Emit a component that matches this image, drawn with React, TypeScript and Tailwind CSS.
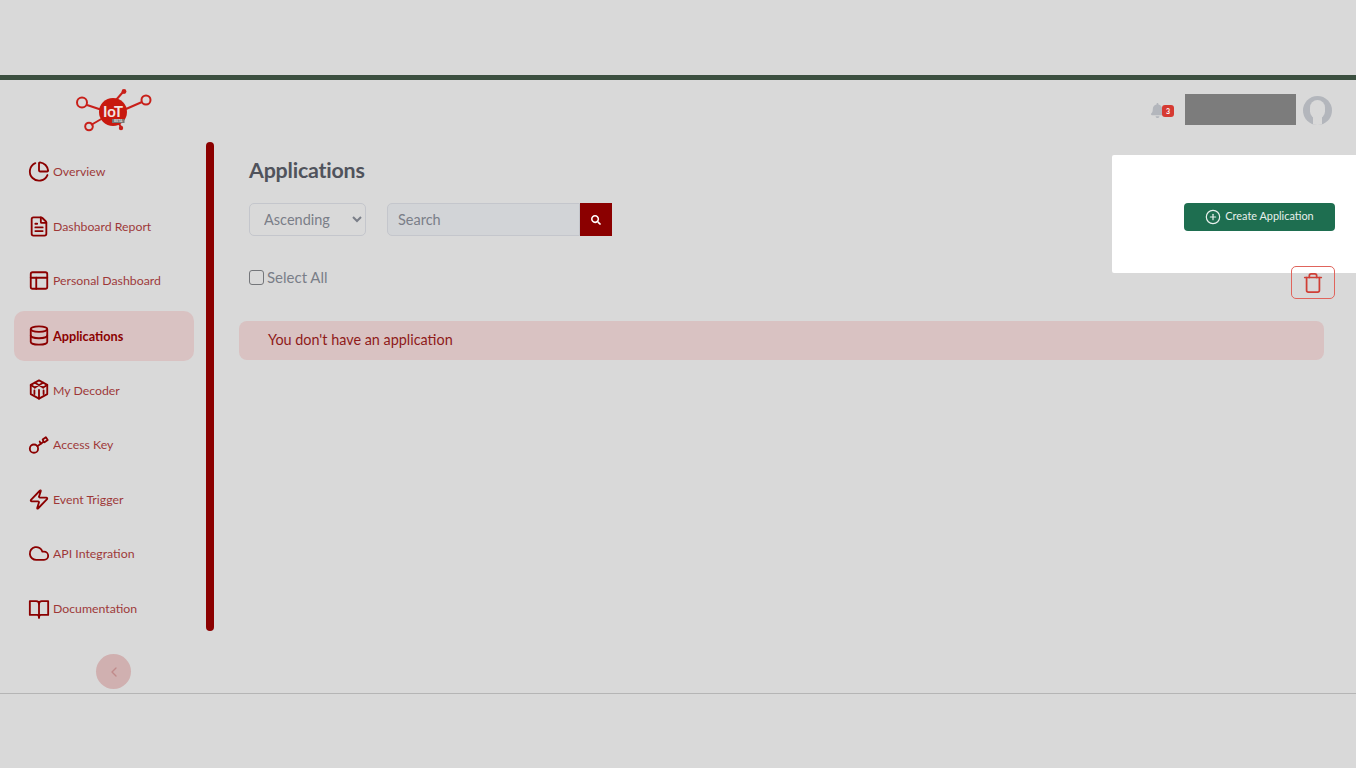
import { ChevronLeft, Cloud, Database, FileText, PanelsTopLeft, PieChart, Trash, Zap, CirclePlus } from "lucide-react";
import { FaBell, FaSearch } from "react-icons/fa";
import type { ReactNode } from "react";

const DecoderIcon = () => (
  <svg viewBox="0 0 24 24" fill="none" stroke="currentColor" strokeWidth="2" strokeLinejoin="round" strokeLinecap="round" className="w-[22px] h-[22px]">
    <path d="M12 2l9 5v10l-9 5-9-5V7z" />
    <path d="M7.5 4.6l9 5.2M16.5 4.6l-9 5.2" />
    <path d="M12 12.5V22M3 7l4.5 2.8M21 7l-4.5 2.8" />
    <path d="M7 13v4M17 13v4" />
  </svg>
);

const KeyIcon = () => (
  <svg viewBox="0 0 24 24" fill="none" stroke="currentColor" strokeWidth="2" strokeLinejoin="round" strokeLinecap="round" className="w-[22px] h-[22px]">
    <circle cx="6.5" cy="16.5" r="4.5" />
    <path d="M10.2 13.8L17 9" />
    <path d="M14 11l-1.2-2.2" />
    <path d="M17 9l-1-2.5 3.5-2.5 2 3-3.5 2.5z" />
  </svg>
);

const BookIcon = () => (
  <svg viewBox="0 0 24 24" fill="none" stroke="currentColor" strokeWidth="2" strokeLinejoin="round" strokeLinecap="round" className="w-[22px] h-[22px]">
    <path d="M2 4h7q3 0 3 3 0-3 3-3h7v15h-8q-2 0-2 3 0-3-2-3H2z" />
    <path d="M12 7v15" />
  </svg>
);

const Logo = () => (
  <svg viewBox="0 0 80 44" className="w-[80px] h-[44px]">
    <g stroke="#c8201a" strokeWidth="2" fill="none">
      <path d="M13 17l15 5M52 21l16-7M42 12l7-8M29 30l-12 7M44 34l3 5" />
      <circle cx="8" cy="14.5" r="5" />
      <circle cx="72" cy="12" r="4.5" />
      <circle cx="15" cy="38.5" r="3.8" />
    </g>
    <circle cx="50" cy="3.5" r="2.4" fill="#c8201a" />
    <circle cx="47" cy="40" r="2.2" fill="#c8201a" />
    <circle cx="39" cy="24" r="14" fill="#c8190f" />
    <text x="39" y="29" textAnchor="middle" fill="#f3e4e2" fontSize="15" fontWeight="700" fontFamily="Lato, sans-serif">IoT</text>
    <rect x="38" y="31" width="12.5" height="4" fill="#777" />
    <text x="44.2" y="34.3" textAnchor="middle" fill="#ddd" fontSize="3.4" fontWeight="700" fontFamily="Lato, sans-serif">BETA</text>
  </svg>
);

const NavItem = ({ icon, label, active }: { icon: ReactNode; label: string; active?: boolean }) => (
  <div className={`flex items-center h-[50px] rounded-[10px] pl-[13px] text-[#8b0000] ${active ? "bg-[#d9c2c2]" : ""}`}>
    <div className="w-[24px] flex justify-center shrink-0 -translate-y-[0.5px]">{icon}</div>
    <span className={`ml-[2px] pt-[1px] ${active ? "text-[12.7px] font-bold" : "text-[12.3px] opacity-75"}`}>{label}</span>
  </div>
);

const iconCls = "w-[22px] h-[22px]";

export default function App() {
  return (
    <div className="relative flex h-[768px] w-full flex-col overflow-hidden bg-[#d9d9d9] font-['Lato','Noto_Sans',sans-serif]">
      <div className="h-[75px] shrink-0" />
      <div className="h-[5px] shrink-0 bg-[#3c5040]" />

      {/* Header */}
      <header className="flex h-[62px] shrink-0 items-center justify-between pr-[24px]">
        <div className="ml-[74px] -mt-[2px]">
          <Logo />
        </div>
        <div className="flex items-center">
          <div className="relative mr-[20px] -mt-[1px] text-[#b3b6bc]">
            <FaBell className="h-[15px] w-[15px]" />
            <span className="absolute -right-[9px] top-[2px] flex h-[12px] w-[12px] items-center justify-center rounded-[3px] bg-[#d63a32] text-[7px] font-bold text-white">3</span>
          </div>
          <div className="-mt-[3px] h-[31px] w-[111px] bg-[#7c7c7c]" />
          <div className="ml-[7px] -mt-[2px] flex h-[29px] w-[29px] items-end justify-center overflow-hidden rounded-full bg-[#b3b6bc]">
            <div className="relative h-[25px] w-[15px]">
              <div className="absolute left-0 top-0 h-[19px] w-[15px] rounded-full bg-[#d9d9d9]" />
              <div className="absolute bottom-0 left-[3px] h-[9px] w-[9px] bg-[#d9d9d9]" />
            </div>
          </div>
        </div>
      </header>

      <div className="flex h-[551px] shrink-0">
        {/* Sidebar */}
        <aside className="relative w-[214px] shrink-0">
          <nav className="flex w-[194px] flex-col gap-[4.6px] pl-[14px] pt-[5px]">
            <NavItem icon={<PieChart className={iconCls} strokeWidth={2} />} label="Overview" />
            <NavItem icon={<FileText className={iconCls} strokeWidth={2} />} label="Dashboard Report" />
            <NavItem icon={<PanelsTopLeft className={iconCls} strokeWidth={2} />} label="Personal Dashboard" />
            <NavItem icon={<Database className={iconCls} strokeWidth={2} />} label="Applications" active />
            <NavItem icon={<DecoderIcon />} label="My Decoder" />
            <NavItem icon={<KeyIcon />} label="Access Key" />
            <NavItem icon={<Zap className={iconCls} strokeWidth={2} />} label="Event Trigger" />
            <NavItem icon={<Cloud className={iconCls} strokeWidth={2} />} label="API Integration" />
            <NavItem icon={<BookIcon />} label="Documentation" />
          </nav>
          <div className="absolute right-0 top-0 h-[489px] w-[8px] rounded-full bg-[#8b0000]" />
          <div className="absolute left-[96px] top-[512px] flex h-[35px] w-[35px] items-center justify-center rounded-full bg-[#d0b0b0] text-[#c08a8a]">
            <ChevronLeft className="h-[16px] w-[16px]" strokeWidth={2} />
          </div>
        </aside>

        {/* Main */}
        <main className="relative flex-1 pl-[35px] pr-[32px]">
          <h1 className="mt-[13px] text-[21.4px] font-bold leading-[30px] tracking-[-0.2px] text-[#50535c]">Applications</h1>

          <div className="relative z-10 mt-[18px] flex items-start justify-between">
            <div className="flex">
              <select className="h-[33px] w-[117px] rounded-[5px] border border-[#c4c6cc] pb-[1px] pl-[10px] text-[14.5px] text-[#7a7e88] outline-none" defaultValue="Ascending">
                <option>Ascending</option>
                <option>Descending</option>
              </select>
              <div className="ml-[21px] flex h-[33px] w-[225px]">
                <input placeholder="Search" className="h-full min-w-0 flex-1 rounded-l-[5px] border border-[#c4c6cc] bg-[#d2d4d7] px-[10px] pb-[1px] text-[14.5px] text-[#7a7e88] outline-none placeholder:text-[#7a7e88]" />
                <div className="flex h-full w-[32px] items-center justify-center bg-[#8b0000] text-white">
                  <FaSearch className="h-[10px] w-[10px]" />
                </div>
              </div>
            </div>
            <button className="-mr-[11px] flex h-[28px] w-[151px] items-center justify-center gap-[4px] rounded-[4px] bg-[#1e6e50] pb-[1px] text-[10.9px] text-[#e8f0ec]">
              <CirclePlus className="h-[16px] w-[16px]" strokeWidth={1.8} />
              Create Application
            </button>
          </div>

          <div className="relative z-10 mt-[30px] flex h-[33px] items-start justify-between">
            <label className="flex items-center text-[15px] text-[#7a7e88]">
              <span className="h-[15px] w-[15px] rounded-[3px] border-[1.5px] border-[#74767a]" />
              <span className="ml-[3px]">Select All</span>
            </label>
            <button className="-mr-[11px] flex h-[33px] w-[44px] items-center justify-center rounded-[5px] border border-[#e0645c] text-[#cf3f36]">
              <Trash className="h-[22px] w-[22px]" strokeWidth={1.9} />
            </button>
          </div>

          <div className="-ml-[10px] mt-[22px] flex h-[39px] items-center rounded-[8px] bg-[#d9c2c2] pb-[2px] pl-[29px] text-[14.4px] text-[#8f1a1a]">
            You don't have an application
          </div>
        </main>
      </div>

      <footer className="flex-1 border-t border-[#b5b5b5]" />

      {/* spotlight over the create button */}
      <div className="absolute left-[1112px] top-[155px] h-[118px] w-[244px] rounded-l-[2px] bg-white" />
    </div>
  );
}
